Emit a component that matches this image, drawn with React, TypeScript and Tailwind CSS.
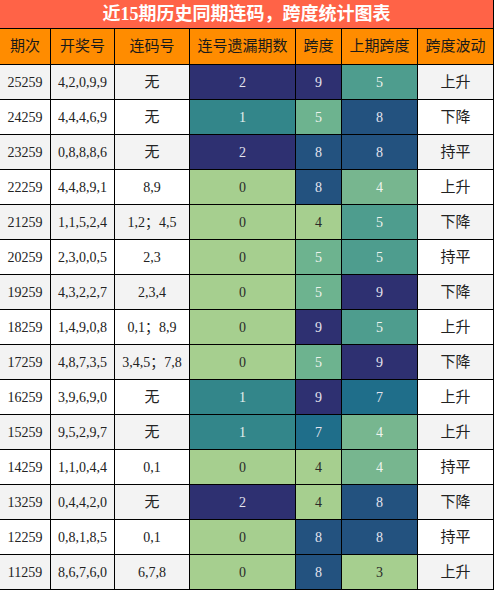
const FONT = "font-['Liberation_Serif','Noto_Sans_CJK_SC',serif]";

type Row = [string, string, string, number, number, number, string];

const rows: Row[] = [
  ['25259', '4,2,0,9,9', '无', 2, 9, 5, '上升'],
  ['24259', '4,4,4,6,9', '无', 1, 5, 8, '下降'],
  ['23259', '0,8,8,8,6', '无', 2, 8, 8, '持平'],
  ['22259', '4,4,8,9,1', '8,9', 0, 8, 4, '上升'],
  ['21259', '1,1,5,2,4', '1,2；4,5', 0, 4, 5, '下降'],
  ['20259', '2,3,0,0,5', '2,3', 0, 5, 5, '持平'],
  ['19259', '4,3,2,2,7', '2,3,4', 0, 5, 9, '下降'],
  ['18259', '1,4,9,0,8', '0,1；8,9', 0, 9, 5, '上升'],
  ['17259', '4,8,7,3,5', '3,4,5；7,8', 0, 5, 9, '下降'],
  ['16259', '3,9,6,9,0', '无', 1, 9, 7, '上升'],
  ['15259', '9,5,2,9,7', '无', 1, 7, 4, '上升'],
  ['14259', '1,1,0,4,4', '0,1', 0, 4, 4, '持平'],
  ['13259', '0,4,4,2,0', '无', 2, 4, 8, '下降'],
  ['12259', '0,8,1,8,5', '0,1', 0, 8, 8, '持平'],
  ['11259', '8,6,7,6,0', '6,7,8', 0, 8, 3, '上升'],
];

const LIGHT = 'bg-[#a6cf8f] text-[#2a2a2a]';
const NAVY = 'bg-[#2e3071] text-[#e4e4ee]';
const BLUE = 'bg-[#23527f] text-[#e4e4ee]';
const STEEL = 'bg-[#1f6e8a] text-[#e4e4ee]';

// each column has its own colour scale
const missColor: Record<number, string> = {
  0: LIGHT,
  1: 'bg-[#33868a] text-[#e4eeee]',
  2: NAVY,
};
const spanColor: Record<number, string> = {
  4: LIGHT,
  5: 'bg-[#6db38f] text-[#eef4ee]',
  7: STEEL,
  8: BLUE,
  9: NAVY,
};
const prevColor: Record<number, string> = {
  3: LIGHT,
  4: 'bg-[#77b68f] text-[#eef4ee]',
  5: 'bg-[#4e9d8e] text-[#eef4ee]',
  7: STEEL,
  8: BLUE,
  9: NAVY,
};

const headers = ['期次', '开奖号', '连码号', '连号遗漏期数', '跨度', '上期跨度', '跨度波动'];

export default function App() {
  return (
    <div className={`w-[494px] bg-black pr-px pb-px ${FONT}`}>
      <div className="grid grid-cols-[50px_63px_74px_105px_45px_75px_75px] gap-px">
        {/* Title */}
        <div className="col-span-7 h-[28px] bg-[#ff6347] flex items-center justify-center text-white text-[18px] font-bold leading-none">
          近15期历史同期连码，跨度统计图表
        </div>

        {/* Header */}
        {headers.map((h) => (
          <div
            key={h}
            className="h-[35px] bg-[#ff8c00] flex items-center justify-center text-[15px] text-[#1a1a1a]"
          >
            {h}
          </div>
        ))}

        {/* Rows */}
        {rows.map((r, idx) => {
          const rowBg = idx % 2 === 0 ? 'bg-[#f3f3f3]' : 'bg-white';
          const cell = 'h-[34px] flex items-center justify-center';
          return [
            <div key={`${r[0]}-a`} className={`${cell} ${rowBg} text-[14px] text-[#222]`}>{r[0]}</div>,
            <div key={`${r[0]}-b`} className={`${cell} ${rowBg} text-[14px] text-[#222]`}>{r[1]}</div>,
            <div
              key={`${r[0]}-c`}
              className={`${cell} ${rowBg} text-[#222] ${r[2] === '无' ? 'text-[15px]' : 'text-[14px]'}`}
            >
              {r[2]}
            </div>,
            <div key={`${r[0]}-d`} className={`${cell} ${missColor[r[3]]} text-[14px]`}>{r[3]}</div>,
            <div key={`${r[0]}-e`} className={`${cell} ${spanColor[r[4]]} text-[14px]`}>{r[4]}</div>,
            <div key={`${r[0]}-f`} className={`${cell} ${prevColor[r[5]]} text-[14px]`}>{r[5]}</div>,
            <div key={`${r[0]}-g`} className={`${cell} ${rowBg} text-[15px] text-[#222]`}>{r[6]}</div>,
          ];
        })}
      </div>
    </div>
  );
}
